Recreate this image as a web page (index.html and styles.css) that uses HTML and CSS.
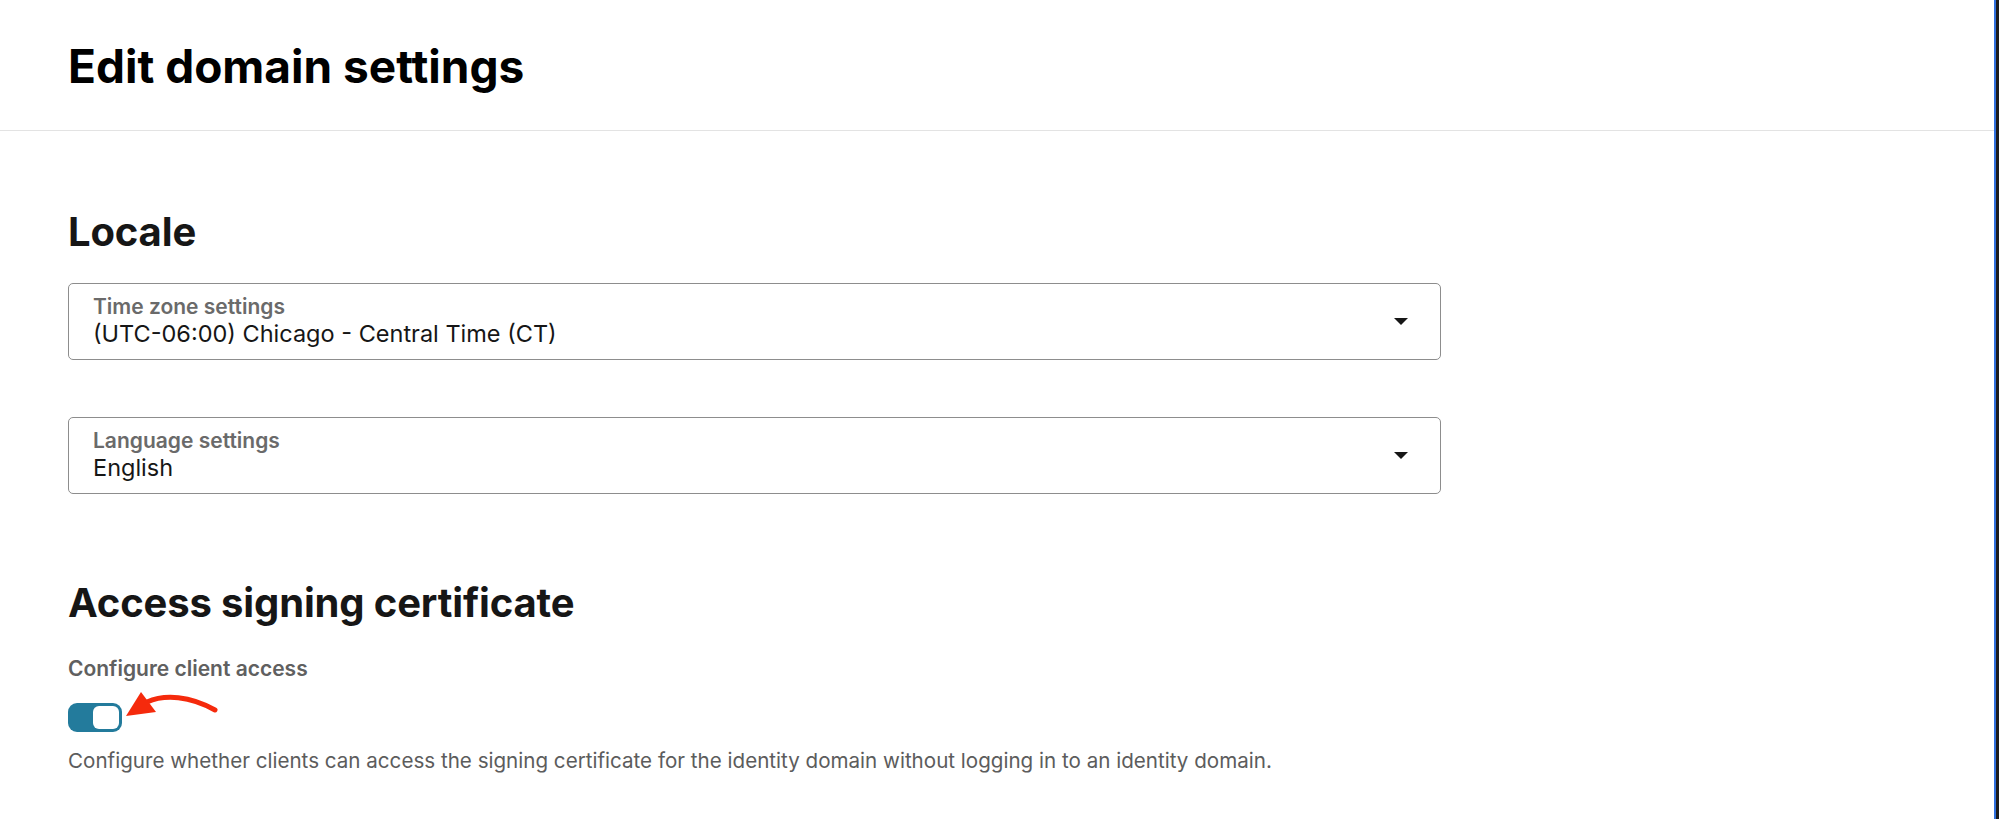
FILE: index.html
```html
<!DOCTYPE html>
<html lang="en">
<head>
<meta charset="utf-8">
<title>Edit domain settings</title>
<link rel="stylesheet" href="styles.css">
</head>
<body>
<div class="window">
  <div class="main">
    <header class="page-header">
      <h1 class="page-title">Edit domain settings</h1>
    </header>
    <section class="content">
      <h2 class="section-title">Locale</h2>
      <div class="select">
        <div class="select-text">
          <span class="select-label">Time zone settings</span>
          <span class="select-value">(UTC-06:00) Chicago - Central Time (CT)</span>
        </div>
        <svg class="caret" width="14" height="7" viewBox="0 0 14 7"><path d="M0 0H14L7 7Z" fill="#161616"/></svg>
      </div>
      <div class="select select-second">
        <div class="select-text">
          <span class="select-label">Language settings</span>
          <span class="select-value">English</span>
        </div>
        <svg class="caret" width="14" height="7" viewBox="0 0 14 7"><path d="M0 0H14L7 7Z" fill="#161616"/></svg>
      </div>

      <h2 class="section-title section-gap">Access signing certificate</h2>
      <div class="field-label">Configure client access</div>
      <div class="toggle-row">
        <div class="toggle"><div class="knob"></div></div>
        <svg class="annot-arrow" width="110" height="40" viewBox="0 0 110 40">
          <path d="M22 12 C 40 4, 65 6, 90 20" fill="none" stroke="#f52a0c" stroke-width="5" stroke-linecap="round"/>
          <path d="M1 26 L16 2 L31 22 Z" fill="#f52a0c"/>
        </svg>
      </div>
      <p class="help">Configure whether clients can access the signing certificate for the identity domain without logging in to an identity domain.</p>
    </section>
  </div>
  <div class="edge"></div>
</div>
</body>
</html>
```
FILE: styles.css
```css
html, body {
  margin: 0;
  padding: 0;
  background: #ffffff;
}
body {
  font-family: Inter, "Liberation Sans", Arial, sans-serif;
  color: #161616;
}
.window {
  display: flex;
  height: 819px;
  overflow: hidden;
}
.main {
  flex: 1;
  min-width: 0;
}
.edge {
  width: 3px;
  background: #1b1b1b;
  border-left: 2px solid #2f6fdc;
}
.page-header {
  height: 130px;
  border-bottom: 1px solid #e3e3e3;
  display: flex;
  align-items: center;
  padding-left: 68px;
}
.page-title {
  margin: 0;
  font-size: 46px;
  font-weight: 700;
  line-height: 50px;
  color: #000;
  position: relative;
  top: 1px;
}
.content {
  padding: 77px 0 0 68px;
  width: 1373px;
}
.section-title {
  margin: 0;
  font-size: 40px;
  font-weight: 700;
  line-height: 48px;
  color: #161616;
  letter-spacing: -0.15px;
}
.section-gap {
  margin-top: 85px;
}
.select {
  margin-top: 27px;
  height: 77px;
  box-sizing: border-box;
  border: 1px solid #8d8d8d;
  border-radius: 5px;
  display: flex;
  align-items: center;
  padding: 0 32px 0 24px;
}
.select-second {
  margin-top: 57px;
}
.select-text {
  flex: 1;
  display: flex;
  flex-direction: column;
}
.select-label {
  font-size: 21px;
  font-weight: 600;
  color: #6a6a6a;
  line-height: 25px;
}
.select-value {
  font-size: 23.5px;
  color: #161616;
  line-height: 30px;
}
.caret {
  display: block;
}
.field-label {
  margin-top: 29px;
  font-size: 21px;
  font-weight: 600;
  color: #606060;
  line-height: 25px;
}
.toggle-row {
  margin-top: 21px;
  display: flex;
  align-items: center;
  height: 30px;
}
.toggle {
  width: 54px;
  height: 29px;
  box-sizing: border-box;
  border-radius: 9px;
  background: #237b9c;
  display: flex;
  justify-content: flex-end;
  align-items: center;
  padding-right: 3px;
}
.knob {
  width: 26px;
  height: 23px;
  background: #ffffff;
  border-radius: 6px;
}
.annot-arrow {
  margin-left: 3px;
  margin-top: -14px;
}
.help {
  margin: 16px 0 0;
  font-size: 20.6px;
  line-height: 25px;
  color: #5c5c5c;
}
```
